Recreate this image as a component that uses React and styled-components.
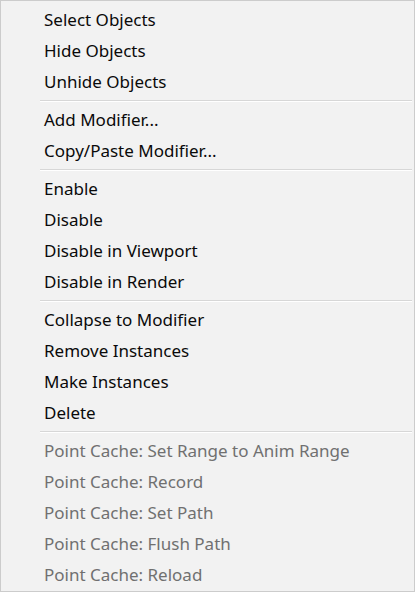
import React from 'react';
import styled, { createGlobalStyle } from 'styled-components';

const GlobalStyle = createGlobalStyle`
    html, body {
        margin: 0;
        padding: 0;
        background: #f2f2f2;
    }
`;

const Menu = styled.div`
    box-sizing: border-box;
    width: 415px;
    height: 592px;
    background: #f2f2f2;
    border: 1px solid #cccccc;
    padding: 3px 2px 0 0;
    font-family: "Noto Sans", "Open Sans", sans-serif;
    font-size: 17px;
`;

const Item = styled.div`
    height: 31px;
    display: flex;
    align-items: center;
    padding-left: 43px;
    color: ${(p) => (p.$disabled ? '#707070' : '#0a0a0a')};
    white-space: nowrap;
`;

const Separator = styled.div`
    height: 7px;
    display: flex;
    align-items: center;
    padding-left: 39px;

    &::after {
        content: '';
        flex: 1;
        height: 1px;
        background: #d7d7d7;
        border-bottom: 1px solid #ffffff;
    }
`;

const groups = [
    [{ label: 'Select Objects' }, { label: 'Hide Objects' }, { label: 'Unhide Objects' }],
    [{ label: 'Add Modifier...' }, { label: 'Copy/Paste Modifier...' }],
    [
        { label: 'Enable' },
        { label: 'Disable' },
        { label: 'Disable in Viewport' },
        { label: 'Disable in Render' },
    ],
    [
        { label: 'Collapse to Modifier' },
        { label: 'Remove Instances' },
        { label: 'Make Instances' },
        { label: 'Delete' },
    ],
    [
        { label: 'Point Cache: Set Range to Anim Range', disabled: true },
        { label: 'Point Cache: Record', disabled: true },
        { label: 'Point Cache: Set Path', disabled: true },
        { label: 'Point Cache: Flush Path', disabled: true },
        { label: 'Point Cache: Reload', disabled: true },
    ],
];

export default function App() {
    return (
        <>
            <GlobalStyle />
            <Menu>
                {groups.map((group, gi) => (
                    <React.Fragment key={gi}>
                        {gi > 0 && <Separator />}
                        {group.map((item) => (
                            <Item key={item.label} $disabled={item.disabled}>
                                {item.label}
                            </Item>
                        ))}
                    </React.Fragment>
                ))}
            </Menu>
        </>
    );
}
